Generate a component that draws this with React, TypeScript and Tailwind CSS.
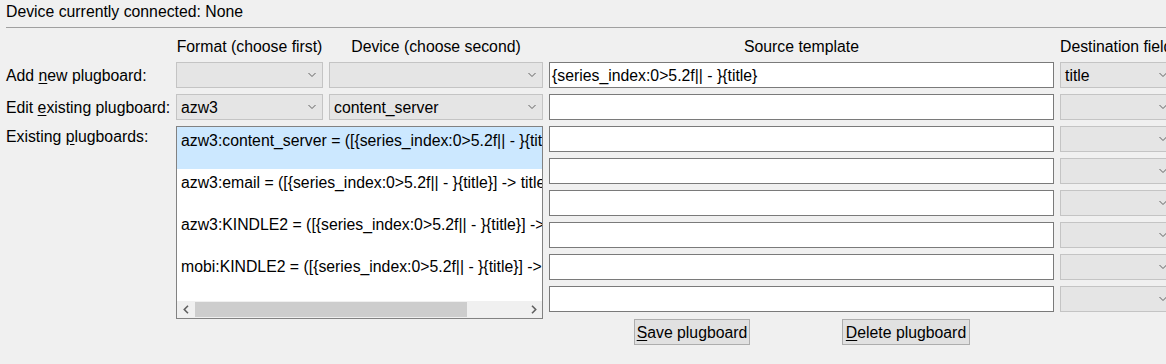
import React from "react";

const Chevron = () => (
  <svg
    className="absolute right-[6px] top-1/2 -translate-y-1/2"
    width="8"
    height="5"
    viewBox="0 0 8 5"
  >
    <polyline points="0.5,0.5 4,4 7.5,0.5" fill="none" stroke="#606060" strokeWidth="1" />
  </svg>
);

const Combo = ({ value = "", className = "" }: { value?: string; className?: string }) => (
  <div
    className={`relative flex h-[26px] items-center whitespace-nowrap border border-[#c4c4c4] bg-[#e5e5e5] pl-[4px] pt-[2px] ${className}`}
  >
    {value}
    <Chevron />
  </div>
);

const Field = ({ value = "" }: { value?: string }) => (
  <div className="flex h-[26px] items-center whitespace-nowrap border border-[#7a7a7a] bg-white pl-[2px] pt-[2px]">
    {value}
  </div>
);

const items = [
  "azw3:content_server = ([{series_index:0>5.2f|| - }{title}] -> title)",
  "azw3:email = ([{series_index:0>5.2f|| - }{title}] -> title)",
  "azw3:KINDLE2 = ([{series_index:0>5.2f|| - }{title}] -> title)",
  "mobi:KINDLE2 = ([{series_index:0>5.2f|| - }{title}] -> title)",
];

// plugboard editor panel
export default function App() {
  return (
    <div className="h-[364px] w-[1166px] overflow-hidden bg-[#f0f0f0] font-['Liberation_Sans',Arial,sans-serif] text-[15.8px] leading-[20px] text-black">
      <div className="h-[22px] pl-[6px] pt-[2px]">Device currently connected: None</div>
      <div className="ml-[6px] mt-[5px] h-px bg-[#a0a0a0]" />

      <div className="mt-[8px] grid grid-cols-[164px_147px_214px_505px_114px] grid-rows-[20px_repeat(9,26px)] gap-x-[6px] gap-y-[6px] pl-[6px]">
        {/* headers */}
        <div />
        <div className="whitespace-nowrap pt-[1px] text-center">Format (choose first)</div>
        <div className="whitespace-nowrap pt-[1px] text-center">Device (choose second)</div>
        <div className="pt-[1px] text-center">Source template</div>
        <div className="whitespace-nowrap pt-[1px]">Destination field</div>

        {/* add row */}
        <div className="flex items-center whitespace-nowrap pt-[2px]">
          Add&nbsp;<span className="underline underline-offset-2">n</span>ew plugboard:
        </div>
        <Combo />
        <Combo />
        <Field value="{series_index:0>5.2f|| - }{title}" />
        <Combo value="title" />

        {/* edit row */}
        <div className="flex items-center whitespace-nowrap pt-[2px]">
          Edit&nbsp;<span className="underline underline-offset-2">e</span>xisting plugboard:
        </div>
        <Combo value="azw3" />
        <Combo value="content_server" />
        <Field />
        <Combo />

        {/* existing list */}
        <div className="row-span-6 whitespace-nowrap pt-[1px]">
          Existing <span className="underline underline-offset-2">p</span>lugboards:
        </div>
        <div className="col-span-2 row-span-6 flex h-[193px] flex-col self-start overflow-hidden border border-[#828282] bg-white">
          <div className="flex-1 overflow-hidden">
            {items.map((t, i) => (
              <div
                key={t}
                className={`h-[42px] whitespace-nowrap px-[4px] pt-[4px] ${i === 0 ? "bg-[#cce8ff]" : ""}`}
              >
                {t}
              </div>
            ))}
          </div>
          <div className="relative flex h-[17px] shrink-0 bg-[#f0f0f0]">
            <div className="flex w-[17px] items-center justify-center">
              <svg width="6" height="9" viewBox="0 0 6 9">
                <polyline points="5,0.8 1.3,4.5 5,8.2" fill="none" stroke="#606060" strokeWidth="1.6" />
              </svg>
            </div>
            <div className="relative flex-1">
              <div className="absolute left-[1px] top-[1px] h-[15px] w-[272px] bg-[#cdcdcd]" />
            </div>
            <div className="flex w-[17px] items-center justify-center">
              <svg width="6" height="9" viewBox="0 0 6 9">
                <polyline points="1,0.8 4.7,4.5 1,8.2" fill="none" stroke="#606060" strokeWidth="1.6" />
              </svg>
            </div>
          </div>
        </div>
        <div className="col-start-4">
          <Field />
        </div>
        <Combo />
        {[0, 1, 2, 3, 4].map((i) => (
          <React.Fragment key={i}>
            <div className="col-start-4">
              <Field />
            </div>
            <Combo />
          </React.Fragment>
        ))}

        {/* buttons */}
        <div className="col-start-4 flex items-start pt-[1px]">
          <button className="ml-[85px] h-[26px] w-[116px] border border-[#adadad] bg-[#e1e1e1] pt-[2px] text-center">
            <span className="underline underline-offset-2">S</span>ave plugboard
          </button>
          <button className="ml-[92px] h-[26px] w-[128px] border border-[#adadad] bg-[#e1e1e1] pt-[2px] text-center">
            <span className="underline underline-offset-2">D</span>elete plugboard
          </button>
        </div>
      </div>
    </div>
  );
}
